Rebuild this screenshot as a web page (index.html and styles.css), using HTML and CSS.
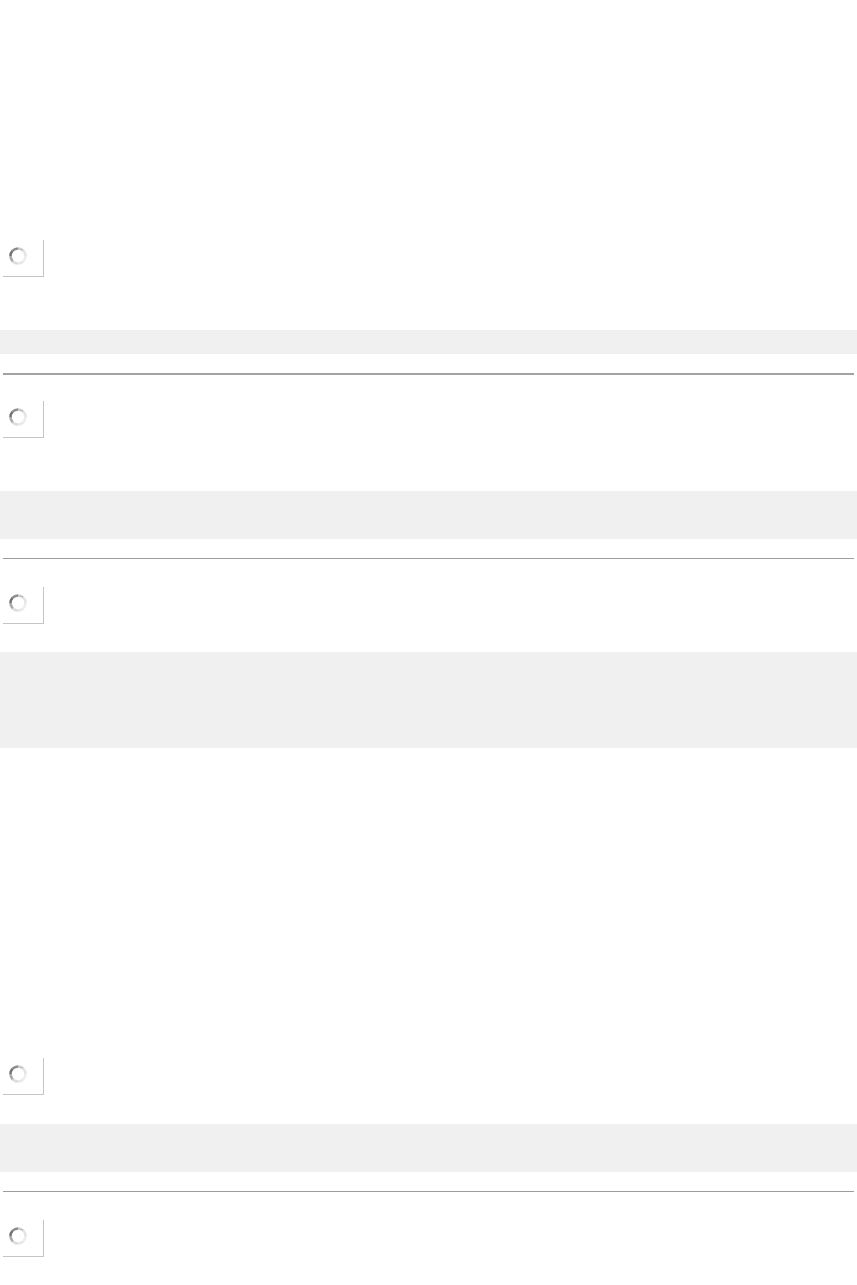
FILE: index.html
```html
<!DOCTYPE html>
<html lang="en">
<head>
<meta charset="utf-8">
<title>Loading</title>
<link rel="stylesheet" href="styles.css">
</head>
<body>
<main class="feed">
  <div class="thumb first">
    <svg class="spinner" width="18" height="18" viewBox="0 0 18 18" fill="none" stroke-width="2.6">
      <path d="M16.5 9A7.5 7.5 0 0 1 14.3 14.3" stroke="#ededed"/>
      <path d="M14.3 14.3A7.5 7.5 0 0 1 9 16.5" stroke="#e8e8e8"/>
      <path d="M9 16.5A7.5 7.5 0 0 1 3.7 14.3" stroke="#dcdcdc"/>
      <path d="M3.7 14.3A7.5 7.5 0 0 1 1.5 9" stroke="#a9a9a9"/>
      <path d="M1.5 9A7.5 7.5 0 0 1 3.7 3.7" stroke="#727272"/>
      <path d="M3.7 3.7A7.5 7.5 0 0 1 9 1.5" stroke="#8c8c8c"/>
      <path d="M9 1.5A7.5 7.5 0 0 1 14.3 3.7" stroke="#c9c9c9"/>
      <path d="M14.3 3.7A7.5 7.5 0 0 1 16.5 9" stroke="#e4e4e4"/>
    </svg>
  </div>
  <div class="block h24 gap-lg"></div>
  <hr class="rule thick">

  <div class="thumb after-rule-thick">
    <svg class="spinner" width="18" height="18" viewBox="0 0 18 18" fill="none" stroke-width="2.6">
      <path d="M16.5 9A7.5 7.5 0 0 1 14.3 14.3" stroke="#ededed"/>
      <path d="M14.3 14.3A7.5 7.5 0 0 1 9 16.5" stroke="#e8e8e8"/>
      <path d="M9 16.5A7.5 7.5 0 0 1 3.7 14.3" stroke="#dcdcdc"/>
      <path d="M3.7 14.3A7.5 7.5 0 0 1 1.5 9" stroke="#a9a9a9"/>
      <path d="M1.5 9A7.5 7.5 0 0 1 3.7 3.7" stroke="#727272"/>
      <path d="M3.7 3.7A7.5 7.5 0 0 1 9 1.5" stroke="#8c8c8c"/>
      <path d="M9 1.5A7.5 7.5 0 0 1 14.3 3.7" stroke="#c9c9c9"/>
      <path d="M14.3 3.7A7.5 7.5 0 0 1 16.5 9" stroke="#e4e4e4"/>
    </svg>
  </div>
  <div class="block h48 gap-lg"></div>
  <hr class="rule">

  <div class="thumb after-rule">
    <svg class="spinner" width="18" height="18" viewBox="0 0 18 18" fill="none" stroke-width="2.6">
      <path d="M16.5 9A7.5 7.5 0 0 1 14.3 14.3" stroke="#ededed"/>
      <path d="M14.3 14.3A7.5 7.5 0 0 1 9 16.5" stroke="#e8e8e8"/>
      <path d="M9 16.5A7.5 7.5 0 0 1 3.7 14.3" stroke="#dcdcdc"/>
      <path d="M3.7 14.3A7.5 7.5 0 0 1 1.5 9" stroke="#a9a9a9"/>
      <path d="M1.5 9A7.5 7.5 0 0 1 3.7 3.7" stroke="#727272"/>
      <path d="M3.7 3.7A7.5 7.5 0 0 1 9 1.5" stroke="#8c8c8c"/>
      <path d="M9 1.5A7.5 7.5 0 0 1 14.3 3.7" stroke="#c9c9c9"/>
      <path d="M14.3 3.7A7.5 7.5 0 0 1 16.5 9" stroke="#e4e4e4"/>
    </svg>
  </div>
  <div class="block h96 gap-sm"></div>

  <div class="thumb after-gap">
    <svg class="spinner" width="18" height="18" viewBox="0 0 18 18" fill="none" stroke-width="2.6">
      <path d="M16.5 9A7.5 7.5 0 0 1 14.3 14.3" stroke="#ededed"/>
      <path d="M14.3 14.3A7.5 7.5 0 0 1 9 16.5" stroke="#e8e8e8"/>
      <path d="M9 16.5A7.5 7.5 0 0 1 3.7 14.3" stroke="#dcdcdc"/>
      <path d="M3.7 14.3A7.5 7.5 0 0 1 1.5 9" stroke="#a9a9a9"/>
      <path d="M1.5 9A7.5 7.5 0 0 1 3.7 3.7" stroke="#727272"/>
      <path d="M3.7 3.7A7.5 7.5 0 0 1 9 1.5" stroke="#8c8c8c"/>
      <path d="M9 1.5A7.5 7.5 0 0 1 14.3 3.7" stroke="#c9c9c9"/>
      <path d="M14.3 3.7A7.5 7.5 0 0 1 16.5 9" stroke="#e4e4e4"/>
    </svg>
  </div>
  <div class="block h48 gap-sm2"></div>
  <hr class="rule">

  <div class="thumb after-rule">
    <svg class="spinner" width="18" height="18" viewBox="0 0 18 18" fill="none" stroke-width="2.6">
      <path d="M16.5 9A7.5 7.5 0 0 1 14.3 14.3" stroke="#ededed"/>
      <path d="M14.3 14.3A7.5 7.5 0 0 1 9 16.5" stroke="#e8e8e8"/>
      <path d="M9 16.5A7.5 7.5 0 0 1 3.7 14.3" stroke="#dcdcdc"/>
      <path d="M3.7 14.3A7.5 7.5 0 0 1 1.5 9" stroke="#a9a9a9"/>
      <path d="M1.5 9A7.5 7.5 0 0 1 3.7 3.7" stroke="#727272"/>
      <path d="M3.7 3.7A7.5 7.5 0 0 1 9 1.5" stroke="#8c8c8c"/>
      <path d="M9 1.5A7.5 7.5 0 0 1 14.3 3.7" stroke="#c9c9c9"/>
      <path d="M14.3 3.7A7.5 7.5 0 0 1 16.5 9" stroke="#e4e4e4"/>
    </svg>
  </div>
</main>
</body>
</html>
```

FILE: styles.css
```css
html, body {
  margin: 0;
  padding: 0;
  background: #ffffff;
  font-family: "Liberation Sans", Arial, sans-serif;
}

.feed {
  display: flow-root;
  padding-top: 240px;
}

.thumb {
  box-sizing: border-box;
  width: 41px;
  height: 37px;
  margin-left: 3px;
  border-right: 1px solid #c4c4c4;
  border-bottom: 1px solid #c4c4c4;
  padding: 7px 0 0 6px;
}

.spinner {
  display: block;
}

.block {
  background: #f0f0f0;
  width: 100%;
}

.h24 { height: 24px; }
.h48 { height: 48px; }
.h96 { height: 96px; }

.gap-lg { margin-top: 53px; }
.gap-sm { margin-top: 28px; }
.gap-sm2 { margin-top: 29px; }

.rule {
  border: 0;
  height: 1px;
  background: #9c9c9c;
  margin: 19px 3px 0 3px;
}

.rule.thick {
  height: 2px;
  background: #a2a2a2;
}

.after-rule-thick { margin-top: 26px; }
.after-rule { margin-top: 28px; }
.after-gap { margin-top: 310px; }
```
